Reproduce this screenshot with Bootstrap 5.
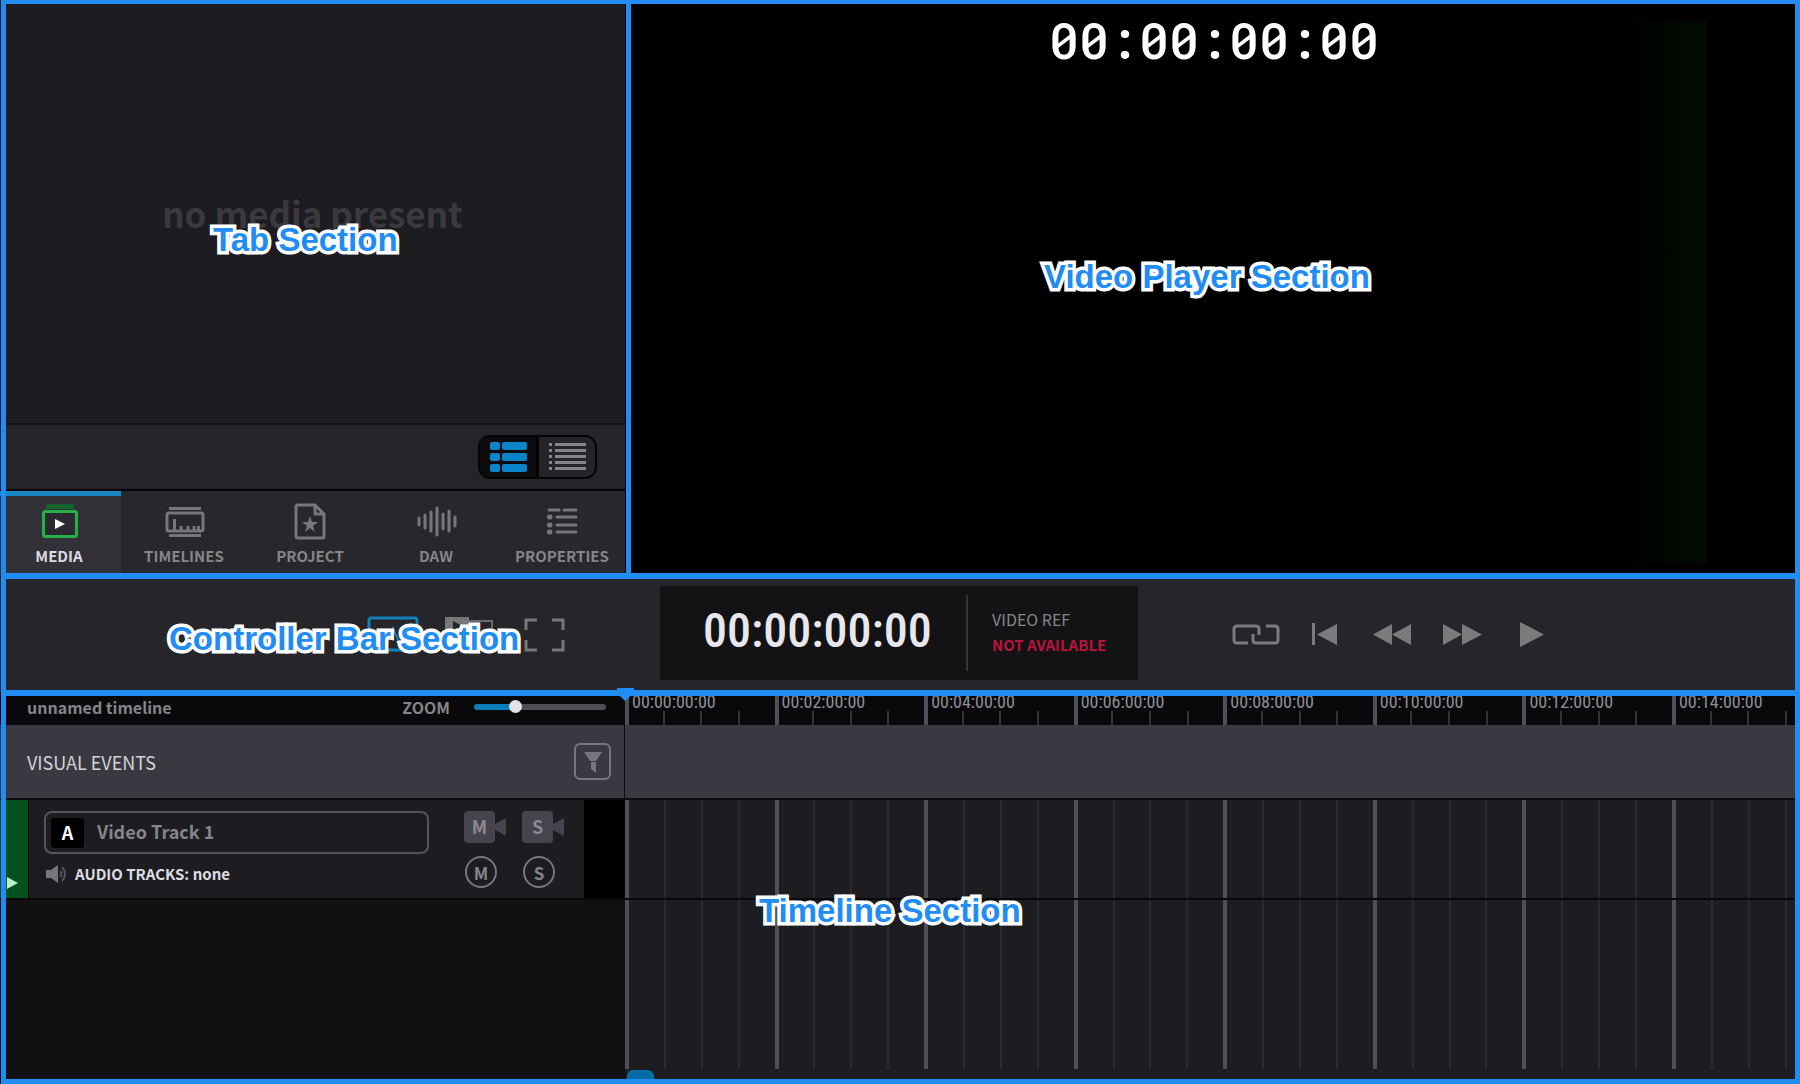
<!DOCTYPE html>
<html lang="en">
<head>
<meta charset="utf-8">
<meta name="viewport" content="width=device-width, initial-scale=1">
<title>Timeline editor</title>
<link href="https://cdn.jsdelivr.net/npm/bootstrap@5.3.0/dist/css/bootstrap.min.css" rel="stylesheet">
<style>
  :root { --frame: #218cf4; --accent: #0b85c9; --muted: #858588; --panel: #1d1c21; --bar: #252429; --raised: #3a3942; }
  body { background: #000; color: var(--muted); font-family: "Noto Sans CJK SC", "Noto Sans", sans-serif; font-size: 16px; line-height: 24px; overflow-x: hidden; }
  button { color: inherit; font: inherit; background: none; border: 0; padding: 0; }
  svg { display: block; flex: none; }

  /* numbered areas of the window, outlined in blue */
  .area { position: relative; }
  .area::after { content: ""; position: absolute; inset: 0; border: 0 solid var(--frame); pointer-events: none; z-index: 3; }
  .area-tabs::after { right: -6px; bottom: -3px; left: 1px; border-width: 4px 5px 6px 5px; }
  .area-video::after { bottom: -3px; border-width: 4px 5px 6px 0; }
  .area-control::after { bottom: -3px; left: 1px; border-width: 0 5px 6px 5px; }
  .area-timeline::after { left: 1px; border-width: 0 5px 5px 5px; }
  .area-title { position: absolute; z-index: 5; margin: 0; white-space: nowrap; color: var(--frame); font: bold 33px/40px "Liberation Sans", Arial, sans-serif; -webkit-text-stroke: 7px #fff; paint-order: stroke fill; }
  .area-tabs .area-title { left: 213px; top: 220px; }
  .area-video .area-title { left: 419px; top: 257px; }
  .area-control .area-title { left: 169px; top: 43px; }
  .area-timeline .area-title { left: 759px; top: 198px; }

  .app { min-height: 100vh; }
  .upper { flex: 576 1 0; }
  .lower { flex: 391 1 0; }
  .side { flex: 0 0 625px; }

  .media-pane { background: var(--panel); padding-top: 2px; border-bottom: 2px solid #121216; }
  .empty-note { color: #3a393e; font-size: 35px; font-weight: 700; line-height: 48px; }
  .tools { background: var(--bar); height: 66px; padding-right: 28px; border-bottom: 2px solid #050507; }
  .view-switch { height: 44px; border: 2px solid #050507; border-radius: 12px; overflow: hidden; }
  .view-switch button { width: 56px; display: flex; align-items: center; justify-content: center; }
  .view-switch .on { background: #0c0c0f; color: var(--accent); width: 59px; border-right: 3px solid #020203; }
  .tabs { background: #28272c; height: 85px; }
  .tab-btn { flex: 1 1 0; border-top: 5px solid transparent; padding-top: 4px; font-size: 15px; font-weight: 700; display: flex; flex-direction: column; align-items: center; gap: 3px; line-height: 22px; }
  .tab-btn svg { margin-left: 2px; }
  .tab-btn.on { flex: 0 0 121px; background: #323138; border-color: #1887c4; color: #dcdbe0; padding-right: 3px; }

  .video { background: #000; }
  .video::before { content: ""; position: absolute; top: 20px; bottom: 12px; right: 94px; width: 90px; background: linear-gradient(90deg, #000, #020a02); }
  .burn-in { color: #fff; font: 500 50px/58px "Roboto Mono", "Noto Sans Mono", "Liberation Mono", monospace; padding: 11px 0 0 3px; }

  .control { background: #262529; padding: 10px 0 13px; }
  .screen-btns { flex: 0 0 660px; padding: 2px 0 0 367px; gap: 25px; }
  .readout { flex: 0 0 478px; height: 94px; background: #131316; }
  .clock { width: 308px; padding: 0 0 2px 43px; border-right: 2px solid #35343a; margin: 9px 0; color: #e8e7eb; font: 500 48px/72px "Roboto Condensed", "Open Sans", sans-serif; }
  .ref { padding: 21px 0 0 24px; line-height: 25px; }
  .ref strong { color: #b7133b; font-size: 15px; font-weight: 700; }
  .transport { padding: 2px 0 0 94px; color: #7b7b7e; }

  .head { background: #09090c; height: 32px; }
  .tl-name { padding: 0 19px 4px 27px; font-weight: 700; line-height: 28px; }
  .zoom { appearance: none; width: 132px; height: 14px; background: transparent; margin: 0; }
  .zoom::-webkit-slider-runnable-track { height: 6px; border-radius: 3px; background: linear-gradient(90deg, #0a7dbb 32%, #504f58 32%); }
  .zoom::-webkit-slider-thumb { appearance: none; width: 13px; height: 13px; margin-top: -4px; border-radius: 50%; background: #e4e3e9; }
  .lane { overflow: hidden; }
  .beat { flex: 0 0 12.73%; }
  .ruler { font: 18px/18px "Roboto Condensed", "Open Sans", sans-serif; color: #8f8f93; position: relative; }
  .ruler .beat { border-left: 4px solid #504f57; padding-left: 3px; position: relative; white-space: nowrap; }
  .ticks { position: absolute; inset: auto -1px 0 -2px; height: 14px; }
  .ticks i { flex: 1 1 0; }
  .ticks i + i { border-left: 2px solid #34333a; }
  .playhead { position: absolute; left: 616px; top: -5px; z-index: 4; color: var(--frame); }

  .events { background: var(--raised); height: 75px; border-bottom: 2px solid #0c0b0e; }
  .events .side { border-right: 1px solid #0c0b0e; padding: 0 13px 0 27px; color: #d3d2d8; font-size: 18px; }
  .filter { width: 37px; height: 37px; border: 2px solid #77767c; border-radius: 6px; display: flex; align-items: center; justify-content: center; color: #77767c; }

  .grid-lane { background: var(--panel); position: relative; }
  .grid-lane .beat { display: flex; }
  .beat-col { flex: 1 1 0; border-left: 2px solid #2b2a30; }
  .beat-col:first-child { border-left: 4px solid #504f57; }
  .track { height: 100px; border-bottom: 2px solid #09090b; }
  .track-body { background: var(--panel); padding: 11px 20px 0 15px; border-left: 1px solid #09090b; }
  .track-color { background: #04501f; width: 28px; padding: 0 0 8px 7px; }
  .track-name { border: 2px solid #55545b; border-radius: 8px; width: 385px; height: 43px; padding-left: 5px; }
  .track-key { background: #000; color: #fff; width: 33px; height: 30px; border-radius: 3px; font-weight: 700; font-size: 18px; line-height: 29px; text-align: center; }
  .track-name input { background: none; border: 0; outline: 0; color: var(--muted); font-weight: 700; font-size: 18px; line-height: 24px; padding: 0 0 3px 13px; width: 330px; }
  .audio { color: #dddce1; font-size: 15px; font-weight: 700; padding-top: 7px; gap: 7px; line-height: 26px; }
  .cam { position: relative; width: 42px; height: 32px; color: #45444f; }
  .cam span { position: absolute; inset: 0 11px 0 0; color: #8b8a90; font-size: 18px; font-weight: 700; line-height: 31px; text-align: center; }
  .round { width: 32px; height: 32px; border: 2px solid #77767c; border-radius: 50%; font-size: 17px; font-weight: 700; line-height: 27px; color: var(--muted); margin-left: 1px; }
  .switches { display: grid; grid-template-columns: 42px 42px; column-gap: 16px; row-gap: 13px; align-content: start; }
  .meter { width: 41px; background: #000; }
  .lower-side { background: #111114; }
  .scroller { height: 15px; background: var(--panel); padding-left: 2px; }
  .scroller button { width: 27px; height: 14px; margin-top: 1px; border-radius: 6px 6px 0 0; background: #076ca5; display: block; }
</style>
</head>
<body>
<div class="app d-flex flex-column">

  <div class="upper d-flex">
    <section class="side area area-tabs d-flex flex-column">
      <h2 class="area-title">Tab Section</h2>
      <div class="media-pane flex-fill d-flex align-items-center justify-content-center">
        <div class="empty-note">no media present</div>
      </div>
      <div class="tools d-flex align-items-center justify-content-end">
        <div class="view-switch d-flex" role="group" aria-label="View">
          <button class="on" type="button" aria-label="Tiles"><svg width="37" height="30" fill="currentColor"><rect x="0" y="0" width="10" height="8" rx="2"/><rect x="12" y="0" width="25" height="8" rx="2"/><rect x="0" y="11" width="10" height="8" rx="2"/><rect x="12" y="11" width="25" height="8" rx="2"/><rect x="0" y="22" width="10" height="8" rx="2"/><rect x="12" y="22" width="25" height="8" rx="2"/></svg></button>
          <button type="button" aria-label="List"><svg width="37" height="28" fill="currentColor"><path d="M0 0h3v3H0zM6 0h31v3H6zM0 6h3v3H0zM6 6h31v3H6zM0 12h3v3H0zM6 12h31v3H6zM0 18h3v3H0zM6 18h31v3H6zM0 24h3v3H0zM6 24h31v3H6z"/></svg></button>
        </div>
      </div>
      <nav class="tabs d-flex">
        <button class="tab-btn on" type="button">
          <svg width="40" height="42" viewBox="0 0 40 42"><path d="M6 9V6q0-2 2-2h24q2 0 2 2v3z" fill="#15642c"/><rect x="3.500" y="11.500" width="33" height="25" rx="2" fill="#2b2a30" stroke="#25b244" stroke-width="3"/><path d="M15 19l10 5-10 5z" fill="#fff"/></svg>
          MEDIA</button>
        <button class="tab-btn" type="button">
          <svg width="40" height="42" viewBox="0 0 40 42" fill="none" stroke="#77777a" stroke-width="3"><path d="M4 8.500h32M4 35.500h32"/><rect x="2" y="13" width="36" height="18" rx="2"/><path d="M9.500 31V19M16 31v-5M23 31v-5M29 31v-5M33.500 31v-5"/></svg>
          TIMELINES</button>
        <button class="tab-btn" type="button">
          <svg width="40" height="42" viewBox="0 0 40 42" fill="none" stroke="#77777a" stroke-width="3"><path d="M7 5h17l9 9v22q0 2-2 2H7q-2 0-2-2V7q0-2 2-2zM24 5v9h9" stroke-linejoin="round"/><path d="M19 16l2 6h6l-5 4 2 6-5-4-5 4 2-6-5-4h6z" fill="#77777a" stroke="none"/></svg>
          PROJECT</button>
        <button class="tab-btn" type="button">
          <svg width="40" height="42" viewBox="0 0 40 42" fill="none" stroke="#77777a" stroke-width="3" stroke-linecap="round"><path d="M2 18v7M8 15v13M14 12v19M20 8v27M26 14v15M32 11v20M38 17v9"/></svg>
          DAW</button>
        <button class="tab-btn" type="button">
          <svg width="40" height="42" viewBox="0 0 40 42" fill="none" stroke="#77777a" stroke-width="3" stroke-linecap="round"><path d="M6 10h10M21 10h12M14 17h19M14 25h19M14 32h19"/><path d="M6.500 17h.5M6.500 25h.5M6.500 32h.5" stroke-width="5"/></svg>
          PROPERTIES</button>
      </nav>
    </section>

    <section class="video area area-video flex-fill">
      <h2 class="area-title">Video Player Section</h2>
      <div class="burn-in text-center">00:00:00:00</div>
    </section>
  </div>

  <section class="control area area-control d-flex align-items-center">
    <h2 class="area-title">Controller Bar Section</h2>
    <div class="screen-btns d-flex align-items-center">
      <button type="button" aria-label="Show timecode overlay"><svg width="52" height="36" fill="none" stroke="#1480bc" stroke-width="3"><rect x="2" y="2" width="48" height="32" rx="2"/><path d="M20 26l6-14 6 14" stroke-width="2"/></svg></button>
      <button type="button" aria-label="Picture in picture"><svg width="50" height="36"><rect x="20" y="5" width="28" height="20" fill="none" stroke="#6b6b6e" stroke-width="2"/><path d="M1 1h24v18H1z" fill="#77777a"/><path d="M9 5l9 5-9 5z" fill="#262529"/></svg></button>
      <button class="ms-1" type="button" aria-label="Full screen"><svg width="42" height="36" fill="none" stroke="#77777a" stroke-width="3"><path d="M3 14V4h11M29 4h11v10M40 24v10H29M14 34H3V24"/></svg></button>
    </div>
    <div class="readout d-flex">
      <div class="clock">00:00:00:00</div>
      <div class="ref">
        <div>VIDEO REF</div>
        <strong>NOT AVAILABLE</strong>
      </div>
    </div>
    <div class="transport d-flex align-items-center">
      <button type="button" aria-label="Loop"><svg width="48" height="28" fill="none" stroke="currentColor" stroke-width="3"><path d="M16 23H5q-3 0-3-3V9q0-3 3-3h19q3 0 3 3v6M34 6h9q3 0 3 3v11q0 3-3 3H24q-3 0-3-3v-6"/></svg></button>
      <button class="ms-4" type="button" aria-label="To start"><svg class="ms-2" width="26" height="28" fill="currentColor"><path d="M0 3h3v22H0zM25 4v21L5 14.500z"/></svg></button>
      <button class="ms-4" type="button" aria-label="Rewind"><svg class="ms-2" width="44" height="28" fill="currentColor"><path d="M22 4v21L3 14.500zM41 4v21L22 14.500z"/></svg></button>
      <button class="ms-4" type="button" aria-label="Fast forward"><svg class="ms-1" width="44" height="28" fill="currentColor"><path d="M1 4v21l19-10.500zM20 4v21l20-10.500z"/></svg></button>
      <button class="ms-4" type="button" aria-label="Play"><svg class="ms-2" width="28" height="28" fill="currentColor"><path d="M2 2v25l24-12.500z"/></svg></button>
    </div>
  </section>

  <section class="lower area area-timeline d-flex flex-column">
    <h2 class="area-title">Timeline Section</h2>
    <svg class="playhead" width="19" height="13" fill="currentColor"><path d="M1 0h17v5l-9 8-8-8z"/></svg>
    <div class="head d-flex">
      <div class="side tl-name d-flex align-items-center">
        <span class="me-auto">unnamed timeline</span>
        <label for="zoom" class="me-4">ZOOM</label>
        <input id="zoom" class="zoom" type="range" min="0" max="100" value="29">
      </div>
      <div class="ruler lane flex-fill d-flex" id="ruler"></div>
    </div>
    <div class="events d-flex">
      <div class="side d-flex align-items-center justify-content-between">
        VISUAL EVENTS
        <button class="filter" type="button" aria-label="Filter"><svg width="20" height="24" fill="currentColor"><path d="M1 2h18l-6 9H7zM8 12h5v11l-5-4z"/></svg></button>
      </div>
    </div>
    <div class="d-flex flex-fill">
      <div class="side lower-side">
        <div class="track d-flex">
          <div class="track-color d-flex align-items-end"><svg width="12" height="14"><path d="M0 1v12l11-6z" fill="#b6f3c4"/></svg></div>
          <div class="track-body flex-fill d-flex justify-content-between">
            <div>
              <div class="track-name d-flex align-items-center">
                <label class="track-key" for="track1">A</label>
                <input id="track1" type="text" value="Video Track 1">
              </div>
              <div class="audio d-flex align-items-center">
                <svg width="24" height="20" viewBox="0 0 24 20"><path d="M2 6h5l7-5v18l-7-5H2z" fill="#77767c"/><path d="M16 7q3 3 0 6M18 3q6 7 0 14" fill="none" stroke="#55545b" stroke-width="2"/></svg>
                AUDIO TRACKS: none
              </div>
            </div>
            <div class="switches">
              <button class="cam" type="button"><svg width="42" height="32" fill="currentColor"><rect width="31" height="32" rx="4"/><path d="M31 13l11-6v18l-11-6z"/></svg><span>M</span></button>
              <button class="cam" type="button"><svg width="42" height="32" fill="currentColor"><rect width="31" height="32" rx="4"/><path d="M31 13l11-6v18l-11-6z"/></svg><span>S</span></button>
              <button class="round" type="button">M</button>
              <button class="round" type="button">S</button>
            </div>
          </div>
          <div class="meter"></div>
        </div>
      </div>
      <div class="flex-fill d-flex flex-column">
        <div class="grid-lane track lane d-flex"></div>
        <div class="grid-lane lane flex-fill d-flex"></div>
        <div class="scroller"><button type="button" aria-label="Scroll timeline"></button></div>
      </div>
    </div>
  </section>
</div>

<script src="https://cdn.jsdelivr.net/npm/bootstrap@5.3.0/dist/js/bootstrap.bundle.min.js"></script>
<script>
  // one beat spans two minutes and is divided in four
  const beats = 8;
  let marks = '', columns = '';
  for (let n = 0; n < beats; n++) {
    marks += `<div class="beat">00:${String(n * 2).padStart(2, '0')}:00:00<div class="ticks d-flex"><i></i><i></i><i></i><i></i></div></div>`;
    columns += '<div class="beat"><div class="beat-col"></div><div class="beat-col"></div><div class="beat-col"></div><div class="beat-col"></div></div>';
  }
  document.getElementById('ruler').innerHTML = marks;
  document.querySelectorAll('.grid-lane').forEach(lane => { lane.innerHTML = columns; });
</script>
</body>
</html>
